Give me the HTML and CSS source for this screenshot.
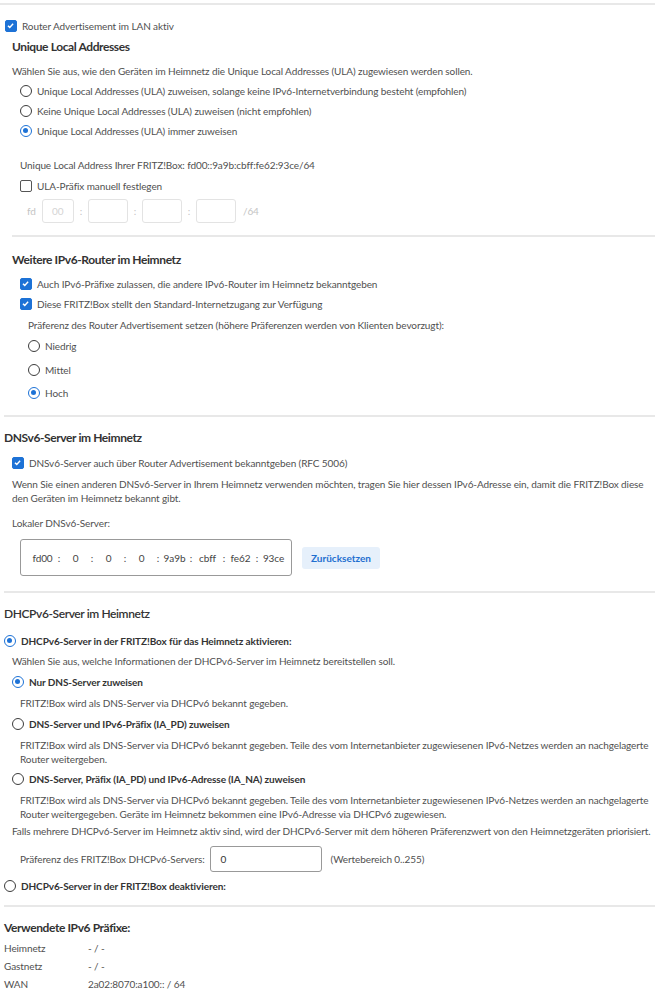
FILE: index.html
```html
<!DOCTYPE html>
<html lang="de">
<head>
    <meta charset="UTF-8">
    <title>IPv6 Heimnetz</title>
    <link rel="stylesheet" href="styles.css">
</head>
<body>
<div class="page">

    <hr class="rule rule-top">

    <!-- Router Advertisement -->
    <div class="row ra-row">
        <span class="cb checked"><svg viewBox="0 0 12 12"><path d="M2.6 6.2 L5 8.5 L9.5 3.6" /></svg></span>
        <span>Router Advertisement im LAN aktiv</span>
    </div>

    <div class="sub">
        <div class="heading h-ula">Unique Local Addresses</div>
        <div class="text intro">Wählen Sie aus, wie den Geräten im Heimnetz die Unique Local Addresses (ULA) zugewiesen werden sollen.</div>
        <div class="indent8">
            <div class="row"><span class="rb"></span><span>Unique Local Addresses (ULA) zuweisen, solange keine IPv6-Internetverbindung besteht (empfohlen)</span></div>
            <div class="row"><span class="rb"></span><span>Keine Unique Local Addresses (ULA) zuweisen (nicht empfohlen)</span></div>
            <div class="row"><span class="rb checked"></span><span>Unique Local Addresses (ULA) immer zuweisen</span></div>

            <div class="row ula-addr">Unique Local Address Ihrer FRITZ!Box: fd00::9a9b:cbff:fe62:93ce/64</div>
            <div class="row ula-cb"><span class="cb"></span><span>ULA-Präfix manuell festlegen</span></div>
            <div class="ula-fields">
                <span class="dim fd">fd</span>
                <span class="field f-first">00</span>
                <span class="dim sep">:</span>
                <span class="field"></span>
                <span class="dim sep">:</span>
                <span class="field"></span>
                <span class="dim sep">:</span>
                <span class="field"></span>
                <span class="dim suffix">/64</span>
            </div>
        </div>

        <hr class="rule rule-sub">

        <!-- Weitere IPv6-Router -->
        <div class="heading h-after-rule h-router">Weitere IPv6-Router im Heimnetz</div>
        <div class="indent8 routers">
            <div class="row"><span class="cb checked"><svg viewBox="0 0 12 12"><path d="M2.6 6.2 L5 8.5 L9.5 3.6" /></svg></span><span>Auch IPv6-Präfixe zulassen, die andere IPv6-Router im Heimnetz bekanntgeben</span></div>
            <div class="row"><span class="cb checked"><svg viewBox="0 0 12 12"><path d="M2.6 6.2 L5 8.5 L9.5 3.6" /></svg></span><span>Diese FRITZ!Box stellt den Standard-Internetzugang zur Verfügung</span></div>
            <div class="indent8">
                <div class="row pref-text">Präferenz des Router Advertisement setzen (höhere Präferenzen werden von Klienten bevorzugt):</div>
                <div class="pref-list">
                    <div class="row"><span class="rb"></span><span>Niedrig</span></div>
                    <div class="row"><span class="rb"></span><span>Mittel</span></div>
                    <div class="row"><span class="rb checked"></span><span>Hoch</span></div>
                </div>
            </div>
        </div>
    </div>

    <hr class="rule rule-sub">

    <!-- DNSv6 -->
    <div class="heading h-after-rule">DNSv6-Server im Heimnetz</div>
    <div class="indent8">
        <div class="row dns-cb"><span class="cb checked"><svg viewBox="0 0 12 12"><path d="M2.6 6.2 L5 8.5 L9.5 3.6" /></svg></span><span>DNSv6-Server auch über Router Advertisement bekanntgeben (RFC 5006)</span></div>
        <p class="para dns-info">Wenn Sie einen anderen DNSv6-Server in Ihrem Heimnetz verwenden möchten, tragen Sie hier dessen IPv6-Adresse ein, damit die FRITZ!Box diese<br>den Geräten im Heimnetz bekannt gibt.</p>
        <div class="row dns-label">Lokaler DNSv6-Server:</div>
        <div class="dns-line">
            <div class="ip-box">
                <span class="seg">fd00</span><span class="colon">:</span>
                <span class="seg">0</span><span class="colon">:</span>
                <span class="seg">0</span><span class="colon">:</span>
                <span class="seg">0</span><span class="colon">:</span>
                <span class="seg">9a9b</span><span class="colon">:</span>
                <span class="seg">cbff</span><span class="colon">:</span>
                <span class="seg">fe62</span><span class="colon">:</span>
                <span class="seg">93ce</span>
            </div>
            <button class="btn-reset">Zurücksetzen</button>
        </div>
    </div>

    <hr class="rule rule-dhcp">

    <!-- DHCPv6 -->
    <div class="heading h-after-rule h-dhcp">DHCPv6-Server im Heimnetz</div>
    <div class="row strong dhcp-on"><span class="rb checked"></span><span>DHCPv6-Server in der FRITZ!Box für das Heimnetz aktivieren:</span></div>
    <div class="indent8">
        <div class="row">Wählen Sie aus, welche Informationen der DHCPv6-Server im Heimnetz bereitstellen soll.</div>
        <div class="row strong opt opt-first"><span class="rb checked"></span><span>Nur DNS-Server zuweisen</span></div>
        <p class="para desc">FRITZ!Box wird als DNS-Server via DHCPv6 bekannt gegeben.</p>
        <div class="row strong opt"><span class="rb"></span><span>DNS-Server und IPv6-Präfix (IA_PD) zuweisen</span></div>
        <p class="para desc">FRITZ!Box wird als DNS-Server via DHCPv6 bekannt gegeben. Teile des vom Internetanbieter zugewiesenen IPv6-Netzes werden an nachgelagerte<br>Router weitergeben.</p>
        <div class="row strong opt opt-last"><span class="rb"></span><span>DNS-Server, Präfix (IA_PD) und IPv6-Adresse (IA_NA) zuweisen</span></div>
        <p class="para desc">FRITZ!Box wird als DNS-Server via DHCPv6 bekannt gegeben. Teile des vom Internetanbieter zugewiesenen IPv6-Netzes werden an nachgelagerte<br>Router weitergegeben. Geräte im Heimnetz bekommen eine IPv6-Adresse via DHCPv6 zugewiesen.</p>
        <p class="para falls">Falls mehrere DHCPv6-Server im Heimnetz aktiv sind, wird der DHCPv6-Server mit dem höheren Präferenzwert von den Heimnetzgeräten priorisiert.</p>
        <div class="pref-line">
            <span>Präferenz des FRITZ!Box DHCPv6-Servers:</span>
            <span class="num-input">0</span>
            <span>(Wertebereich 0..255)</span>
        </div>
    </div>
    <div class="row strong dhcp-off"><span class="rb"></span><span>DHCPv6-Server in der FRITZ!Box deaktivieren:</span></div>

    <hr class="rule rule-prefix">

    <!-- Präfixe -->
    <div class="heading h-after-rule h-prefix">Verwendete IPv6 Präfixe:</div>
    <table class="prefixes">
        <tr><td>Heimnetz</td><td>- / -</td></tr>
        <tr><td>Gastnetz</td><td>- / -</td></tr>
        <tr><td>WAN</td><td>2a02:8070:a100:: / 64</td></tr>
    </table>

</div>
</body>
</html>
```

FILE: styles.css
```css
body {
    margin: 0;
    font-family: Lato, "Liberation Sans", sans-serif;
    font-size: 10px;
    letter-spacing: -0.1px;
    color: #505050;
    background: #fff;
}

.page {
    padding: 0 4px 0 4px;
}

/* Trennlinien */
.rule {
    border: none;
    border-top: 2px solid #e8e8e8;
    margin: 0 4px 0 0;
}

.rule-top {
    margin: 3px 4px 0 -4px;
}

.rule-sub {
    margin-top: 12px;
}

/* Zeilen */
.row {
    display: flex;
    align-items: center;
    gap: 5px;
    height: 20px;
    white-space: nowrap;
}

.ra-row {
    margin-top: 11px;
    padding-left: 1px;
}

.sub {
    padding-left: 8px;
}

.indent8 {
    padding-left: 8px;
}

.heading {
    height: 20px;
    line-height: 20px;
    font-weight: 700;
    font-size: 12px;
    letter-spacing: -0.4px;
    color: #333;
}

.h-ula {
    margin-top: 1px;
}

.intro {
    margin-top: 4px;
    height: 20px;
    line-height: 20px;
}

.h-after-rule {
    margin-top: 11px;
}

.h-router {
    margin-top: 13px;
}

.ula-addr {
    margin-top: 14px;
}

.ula-cb {
    margin-top: 1px;
}

/* ULA Eingabefelder (deaktiviert) */
.ula-fields {
    display: flex;
    align-items: center;
    height: 24px;
    margin-top: 3px;
    color: #c4c4c4;
}

.fd {
    margin-left: 7px;
    width: 15px;
}

.field {
    width: 40px;
    height: 24px;
    border: 1px solid #e3e3e3;
    border-radius: 3px;
    line-height: 22px;
    padding-left: 9px;
    box-sizing: border-box;
    color: #d4d4d4;
}

.f-first {
    width: 32px;
}

.sep {
    width: 14px;
    text-align: center;
}

.suffix {
    margin-left: 7px;
}

/* Checkbox und Radio */
.cb {
    width: 12px;
    height: 12px;
    border: 1.5px solid #555;
    border-radius: 2px;
    flex: none;
    display: flex;
    box-sizing: border-box;
}

.cb.checked {
    background: #1d72d6;
    border-color: #1d72d6;
}

.cb svg {
    width: 9px;
    height: 9px;
}

.cb path {
    fill: none;
    stroke: #fff;
    stroke-width: 1.9;
}

.rb {
    width: 12px;
    height: 12px;
    border: 1.5px solid #3c3c3c;
    border-radius: 50%;
    flex: none;
    position: relative;
    box-sizing: border-box;
}

.rb.checked {
    border-color: #1d72d6;
}

.rb.checked::after {
    content: "";
    position: absolute;
    left: 2px;
    top: 2px;
    width: 5px;
    height: 5px;
    border-radius: 50%;
    background: #1d72d6;
}

.routers {
    margin-top: 4px;
}

.pref-text {
    margin-top: 1px;
}

.pref-list {
    display: flex;
    flex-direction: column;
    gap: 3.5px;
    margin-top: 1px;
}

/* DNSv6 */
.dns-cb {
    margin-top: 5px;
}

.para {
    margin: 0;
    line-height: 14px;
    white-space: nowrap;
}

.dns-info {
    margin-top: 4px;
}

.dns-label {
    margin-top: 8px;
}

.dns-line {
    display: flex;
    align-items: center;
    gap: 10px;
    margin-top: 6px;
    padding-left: 8px;
}

.ip-box {
    width: 272px;
    height: 37px;
    border: 1px solid #999;
    border-radius: 3px;
    box-sizing: border-box;
    display: flex;
    align-items: center;
    padding-left: 10px;
    color: #444;
}

.seg {
    width: 23px;
    text-align: center;
}

.colon {
    width: 10px;
    text-align: center;
}

.btn-reset {
    border: none;
    background: #e6f0fb;
    color: #1f6fd0;
    font-family: inherit;
    font-size: 10px;
    letter-spacing: 0;
    font-weight: 700;
    height: 22px;
    padding: 0 9px;
    border-radius: 3px;
}

.rule-dhcp {
    margin-top: 15px;
}

/* DHCPv6 */
.h-dhcp {
    font-weight: 600;
}

.strong {
    font-weight: 700;
    color: #333;
}

.dhcp-on {
    margin-top: 7px;
}

.opt {
    margin-top: 4px;
}

.opt-first {
    margin-top: 1px;
}

.desc {
    margin-top: 4px;
    padding-left: 8px;
}

.opt-last {
    margin-top: 3px;
}

.falls {
    margin-top: 3px;
}

.pref-line {
    display: flex;
    align-items: center;
    gap: 5px;
    margin-top: 8px;
    padding-left: 8px;
}

.num-input {
    width: 112px;
    height: 26px;
    border: 1px solid #999;
    border-radius: 3px;
    box-sizing: border-box;
    line-height: 24px;
    padding-left: 10px;
    color: #333;
    margin-right: 4px;
}

.dhcp-off {
    margin-top: 4px;
}

.rule-prefix {
    margin-top: 9px;
}

/* Präfixe */
.prefixes {
    border-collapse: collapse;
    margin-top: 1px;
}

.prefixes td {
    padding: 0;
    height: 18px;
    line-height: 18px;
}

.prefixes td:first-child {
    width: 84px;
}
```
